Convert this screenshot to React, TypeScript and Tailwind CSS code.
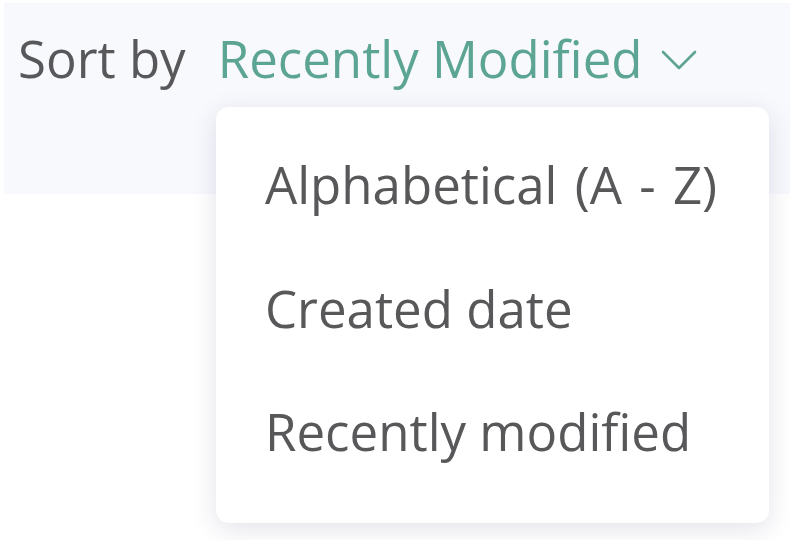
import React from "react";

const items = ["Alphabetical (A - Z)", "Created date", "Recently modified"];

export default function App() {
    return <div className="w-[790px] h-[540px] bg-white pt-[3px] pl-[4px] overflow-hidden" style={{ fontFamily: '"Open Sans", "Noto Sans", sans-serif' }}>
        <div className="relative h-[191px] bg-[#f8f9fd]">
            <div className="flex items-center pl-[14px] pt-[23px] text-[51px] leading-[64px]">
                <span className="text-[#58585a]">Sort by</span>
                <button className="flex items-center ml-[32px] text-[#5ca594]">
                    <span>Recently Modified</span>
                    <svg className="ml-[19px] mt-[4px]" width="36" height="22" viewBox="0 0 36 22" fill="none">
                        <path d="M2 3 L18 19 L34 3" stroke="#5ca594" strokeWidth="2.6" strokeLinecap="round" strokeLinejoin="round" />
                    </svg>
                </button>
            </div>
            {/* dropdown */}
            <div className="absolute left-[212px] top-[104px] w-[553px] h-[416px] bg-white rounded-[13px] shadow-[0_6px_26px_rgba(40,40,90,0.13)] flex flex-col pt-[45px] pl-[49px]">
                {items.map((it, i) => <div key={it} className={i === 0 ? "h-[128px] text-[51px] leading-[64px] text-[#58585a] [word-spacing:4px]" : "h-[128px] text-[51px] leading-[64px] text-[#58585a]"}>{it}</div>)}
            </div>
        </div>
    </div>
}
